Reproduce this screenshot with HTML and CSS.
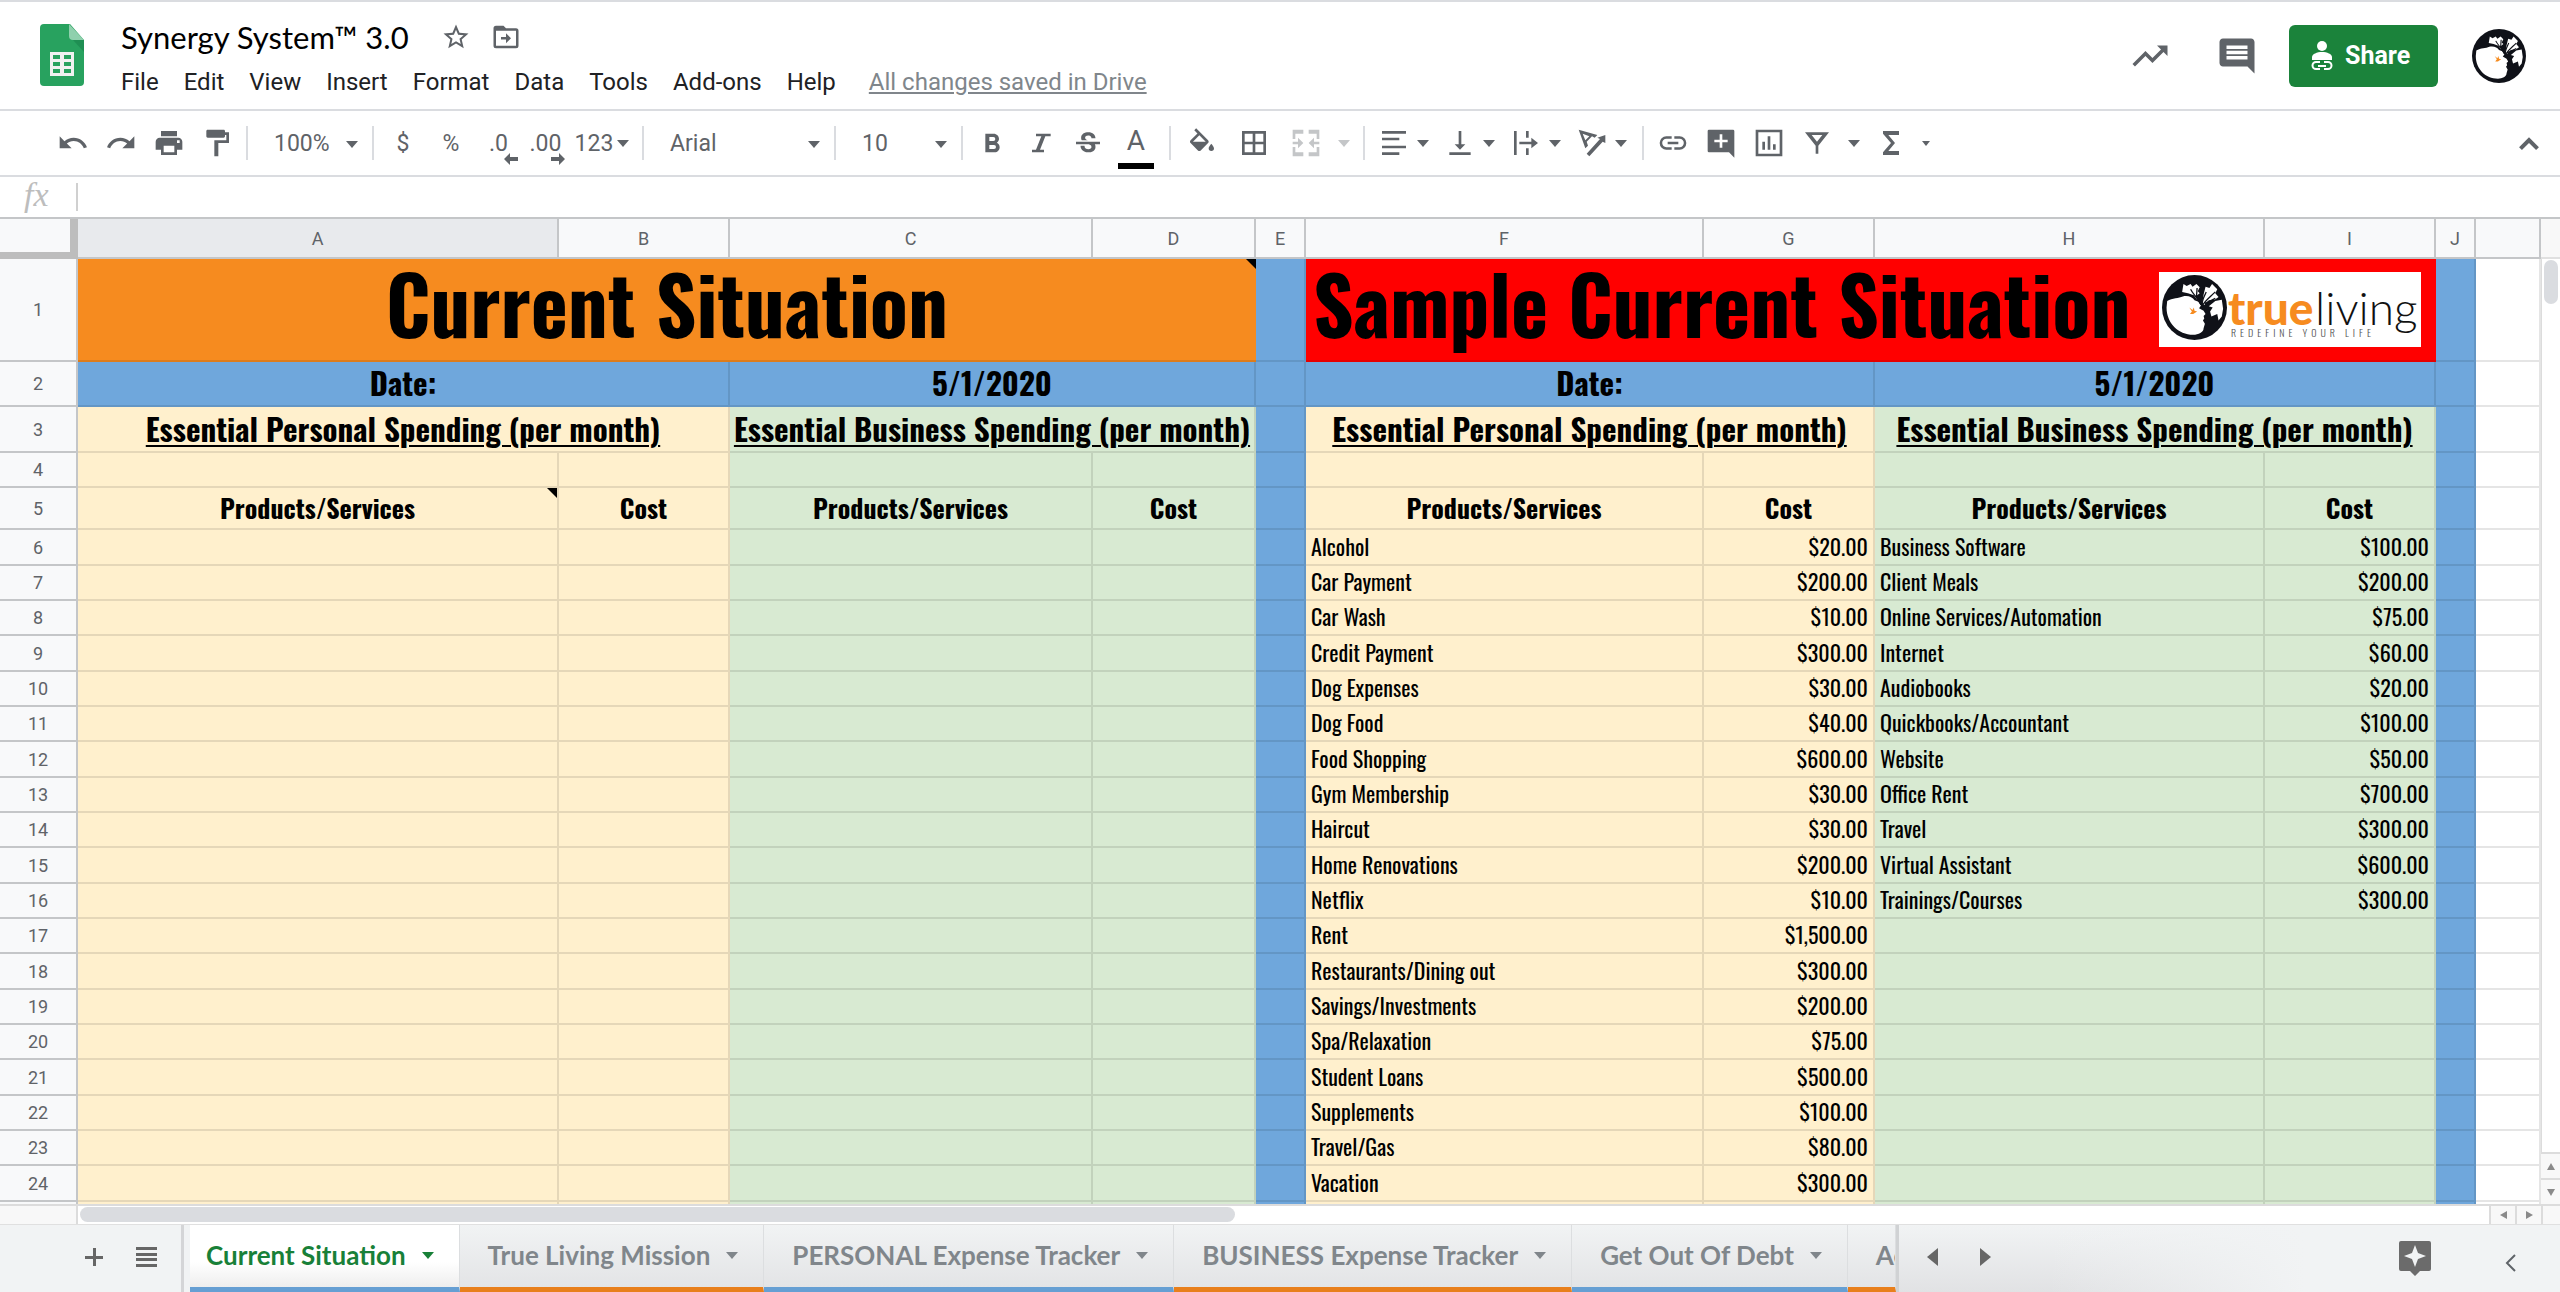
FILE: index.html
```html
<!DOCTYPE html>
<html lang="en">
<head>
    <meta charset="utf-8">
    <title>Synergy System™ 3.0</title>
    <link rel="stylesheet" href="styles.css">
</head>
<body>
    <svg class="defs" aria-hidden="true">
        <symbol id="tree" viewBox="0 0 100 100">
            <circle cx="50" cy="50" r="50" fill="#0f1118"/>
            <path fill="#fff" d="M8 40C16 35 26 36 32 33C40 31 47 34 50 39L56 41L60 47L57 51L64 55L67 60L64 63L65 67L63 70L66 75L64 82C64 88 56 92 48 92C25 92 7 74 7 50Z"/>
            <path fill="#fff" d="M31 26L33 14L38 17L44 14L47 18L53 14L58 19L55 25L58 28L53 32L54 38L49 31L40 28Z"/>
            <path fill="#fff" d="M64 30L67 18L73 20L77 14L85 22L82 28L87 34L81 38L72 39L65 46L62 44Z"/>
            <path fill="#fff" d="M82 40L92 38L94 52L92 64L87 70L85 60L76 64L74 56L78 50L72 48Z"/>
            <path fill="none" stroke="#0f1118" stroke-width="2" d="M62 50C60 40 64 36 68 26M62 47C68 38 74 34 82 26M60 46C54 34 48 30 44 22M53 34L54 20M66 44L82 36"/>
            <path fill="#f68b1f" d="M42 50L47 54L49 50L50 55L54 56L48 60L43 60L46 56Z"/>
        </symbol>
    </svg>

    <header class="top">
        <svg class="sheets-logo" viewBox="0 0 44 62">
            <path fill="#28a25f" d="M4 0h26l14 16v42a4 4 0 0 1-4 4H4a4 4 0 0 1-4-4V4a4 4 0 0 1 4-4z"/>
            <path fill="#8fd0ad" d="M29 0l15 16H33a4 4 0 0 1-4-4z"/>
            <path fill="#1f8f53" d="M33 16h11v12z"/>
            <path fill="#f1f1f1" fill-rule="evenodd" d="M10 28h24v24H10zM13 31v4h7v-4zM24 31v4h7v-4zM13 38v4h7v-4zM24 38v4h7v-4zM13 45v4h7v-4zM24 45v4h7v-4z"/>
        </svg>
        <div class="doc">
            <div class="title-row">
                <h1>Synergy System™ 3.0</h1>
                <button class="plain" aria-label="Star"><svg width="30" height="30" viewBox="0 0 24 24"><path d="M22 9.24l-7.19-.62L12 2 9.19 8.63 2 9.24l5.46 4.73L5.82 21 12 17.27 18.18 21l-1.63-7.03L22 9.24zM12 15.4l-3.76 2.27 1-4.28-3.32-2.88 4.38-.38L12 6.1l1.71 4.04 4.38.38-3.32 2.88 1 4.28L12 15.4z"/></svg></button>
                <button class="plain" aria-label="Move"><svg width="30" height="30" viewBox="0 0 24 24"><path fill-rule="evenodd" d="M4 3h6l2 2h8a2 2 0 0 1 2 2v12a2 2 0 0 1-2 2H4a2 2 0 0 1-2-2V5a2 2 0 0 1 2-2zM4 7v12h16V7zM12 9l4 4-4 4v-3H8v-2h4z"/></svg></button>
            </div>
            <nav class="menus">
                <a href="#">File</a>
                <a href="#">Edit</a>
                <a href="#">View</a>
                <a href="#">Insert</a>
                <a href="#">Format</a>
                <a href="#">Data</a>
                <a href="#">Tools</a>
                <a href="#">Add-ons</a>
                <a href="#">Help</a>
                <a href="#" class="saved">All changes saved in Drive</a>
            </nav>
        </div>
        <div class="actions">
            <button class="plain" aria-label="Activity"><svg width="42" height="42" viewBox="0 0 24 24"><path d="M16 6l2.290 2.290-4.880 4.880-4-4L2 16.590 3.410 18l6-6 4 4 6.300-6.290L22 12V6z"/></svg></button>
            <button class="plain" aria-label="Comments"><svg width="42" height="42" viewBox="0 0 24 24"><path fill-rule="evenodd" d="M22 4c0-1.100-.9-2-2-2H4c-1.100 0-2 .9-2 2v12c0 1.100.9 2 2 2h14l4 4zM18 14H6v-2h12zM18 11H6V9h12zM18 8H6V6h12z"/></svg></button>
            <button class="share">
                <svg width="22" height="30" viewBox="0 0 22 30"><circle cx="11" cy="5" r="5"/><path d="M1 19v-3c0-3 5-5 10-5s10 2 10 5v3z"/><path class="line" d="M9 21H5a3 3 0 0 0 0 7h4M13 21h4a3 3 0 0 1 0 7h-4M7 25h8"/></svg>
                Share
            </button>
            <button class="plain avatar" aria-label="Account"><svg width="54" height="54"><use href="#tree"/></svg></button>
        </div>
    </header>

    <div class="toolbar">
        <div class="group history">
            <button aria-label="Undo"><svg viewBox="0 0 24 24"><path d="M12.500 8c-2.650 0-5.050.99-6.900 2.600L2 7v9h9l-3.620-3.620c1.390-1.160 3.160-1.880 5.120-1.880 3.540 0 6.550 2.310 7.600 5.500l2.370-.78C21.080 11.030 17.150 8 12.500 8z"/></svg></button>
            <button aria-label="Redo"><svg viewBox="0 0 24 24"><path d="M18.400 10.600C16.550 8.990 14.150 8 11.500 8c-4.650 0-8.580 3.030-9.960 7.220L3.900 16c1.050-3.190 4.050-5.500 7.600-5.500 1.950 0 3.730.72 5.120 1.880L13 16h9V7l-3.600 3.600z"/></svg></button>
            <button aria-label="Print"><svg viewBox="0 0 24 24"><path fill-rule="evenodd" d="M19 8H5c-1.660 0-3 1.340-3 3v6h4v4h12v-4h4v-6c0-1.660-1.340-3-3-3zM16 19H8v-5h8zM18 10h2v2h-2zM18 3H6v4h12z"/></svg></button>
            <button aria-label="Paint format"><svg viewBox="0 0 24 24"><path d="M18 4V3c0-.55-.45-1-1-1H5c-.55 0-1 .45-1 1v4c0 .55.45 1 1 1h12c.55 0 1-.45 1-1V6h1v4H10v12h3v-10h8V4z"/></svg></button>
        </div>
        <div class="group zoom">
            <label class="pick"><select aria-label="Zoom"><option>100%</option></select></label>
        </div>
        <div class="group numbers">
            <button>$</button>
            <button>%</button>
            <button class="decimal">.0<svg viewBox="0 0 14 12"><path d="M0 6l6-6v4h8v4H6v4z"/></svg></button>
            <button class="decimal">.00<svg viewBox="0 0 14 12"><path d="M14 6L8 0v4H0v4h8v4z"/></svg></button>
            <button class="more">123<i class="caret"></i></button>
        </div>
        <div class="group font">
            <label class="pick"><select aria-label="Font"><option>Arial</option></select></label>
        </div>
        <div class="group size">
            <label class="pick"><select aria-label="Font size"><option>10</option></select></label>
        </div>
        <div class="group style">
            <button aria-label="Bold"><svg viewBox="0 0 24 24"><path fill-rule="evenodd" d="M15.600 11.790c.97-.67 1.650-1.770 1.650-2.790 0-2.260-1.750-4-4-4H7v14h7.040c2.090 0 3.710-1.700 3.710-3.790 0-1.520-.86-2.820-2.150-3.420zM10 7.500h3a1.500 1.500 0 0 1 0 3h-3zM13.500 16.500H10v-3h3.500a1.500 1.500 0 0 1 0 3z"/></svg></button>
            <button aria-label="Italic"><svg viewBox="0 0 24 24"><path d="M9 5v2h4l-4 10H6v2h9v-2h-3l4-10h4V5z"/></svg></button>
            <button aria-label="Strikethrough"><svg viewBox="0 0 24 24"><path d="M6.850 8.080C6.850 5.370 9.450 4 12.240 4c1.640 0 3 .49 3.900 1.280.77.65 1.460 1.730 1.460 3.240h-3.010c0-.31-.05-.59-.15-.85-.29-.86-1.200-1.280-2.250-1.280-1.860 0-2.340 1.020-2.340 1.700 0 .48.25.88.74 1.210.38.25.77.48 1.410.7H7.390c-.21-.34-.54-.89-.54-1.920zM21 13v-2H3v2h9.620c1.150.45 1.960.75 1.960 1.970 0 1-.81 1.670-2.280 1.670-1.540 0-2.930-.54-2.930-2.510H6.400c0 .55.08 1.130.24 1.580.81 2.290 3.290 3.300 5.670 3.300 2.270 0 5.300-.89 5.300-4.050 0-.3-.01-1.160-.48-1.940z"/></svg></button>
            <button class="text-color">A</button>
        </div>
        <div class="group cells">
            <button aria-label="Fill color"><svg viewBox="0 0 24 24"><path fill-rule="evenodd" d="M16.560 9.940L7.620 1 6.210 2.410l2.380 2.380-5.150 5.150c-.59.59-.59 1.540 0 2.120l5.500 5.500c.6.6 1.500.6 2.120 0l5.500-5.500c.59-.58.59-1.530 0-2.120zM5.210 11L10 6.210 14.790 11zM19 12.500s-2 2.170-2 3.500a2 2 0 0 0 4 0c0-1.330-2-3.500-2-3.500z"/></svg></button>
            <button aria-label="Borders"><svg viewBox="0 0 24 24"><path fill-rule="evenodd" d="M3 3v18h18V3zM11 19H5v-6h6zM11 11H5V5h6zM19 19h-6v-6h6zM19 11h-6V5h6z"/></svg></button>
            <button aria-label="Merge cells" disabled><svg viewBox="0 0 24 24"><path d="M2 2h8v3H4v4H2zM14 2h8v7h-2V5h-6zM2 15h2v4h6v3H2zM20 15h2v7h-8v-3h6zM2 11h4V8l4 4-4 4v-3H2zM22 11h-4V8l-4 4 4 4v-3h4z"/></svg></button>
            <i class="caret off"></i>
        </div>
        <div class="group align">
            <button aria-label="Horizontal align"><svg viewBox="0 0 24 24"><path d="M3 3h18v2H3zM3 8h13v2H3zM3 14h18v2H3zM3 19h13v2H3z"/></svg><i class="caret"></i></button>
            <button aria-label="Vertical align"><svg viewBox="0 0 24 24"><path d="M16 13h-3V3h-2v10H8l4 4zM4 19v2h16v-2z"/></svg><i class="caret"></i></button>
            <button aria-label="Text wrapping"><svg viewBox="0 0 24 24"><path d="M3 3h2v18H3zM12 3h2v5h-2zM12 16h2v5h-2zM7 11h9V8l5 4-5 4v-3H7z"/></svg><i class="caret"></i></button>
            <button aria-label="Text rotation"><svg viewBox="0 0 24 24"><path fill-rule="evenodd" d="M2 2l14 4-2 2-2-1-4 4 1 3-2 2zM5 5l2 5 3-3zM8 20L18 9l-2-1 6-2v6l-2-1L10 22z"/></svg><i class="caret"></i></button>
        </div>
        <div class="group insert">
            <button aria-label="Insert link"><svg viewBox="0 0 24 24"><path d="M3.900 12c0-1.710 1.390-3.100 3.100-3.100h4V7H7a5 5 0 0 0 0 10h4v-1.900H7c-1.710 0-3.100-1.390-3.100-3.100zM8 13h8v-2H8zM17 7h-4v1.900h4a3.100 3.100 0 0 1 0 6.200h-4V17h4a5 5 0 0 0 0-10z"/></svg></button>
            <button aria-label="Insert comment"><svg viewBox="0 0 24 24"><path fill-rule="evenodd" d="M22 3a1 1 0 0 0-1-1H3a1 1 0 0 0-1 1v15a1 1 0 0 0 1 1h15l4 4zM17 11.500h-4v4h-2v-4H7v-2h4v-4h2v4h4z"/></svg></button>
            <button aria-label="Insert chart"><svg viewBox="0 0 24 24"><path fill-rule="evenodd" d="M2 2v20h20V2zM20 20H4V4h16zM7 11h2v6H7zM11 7h2v10h-2zM15 13h2v4h-2z"/></svg></button>
            <button aria-label="Filter"><svg viewBox="0 0 24 24"><path fill-rule="evenodd" d="M3 4h18l-8 10v6h-2v-6zM8 6l4 5 4-5z"/></svg></button>
            <i class="caret"></i>
            <button aria-label="Functions"><svg viewBox="0 0 24 24"><path d="M18 3H6v2l6 7-6 7v2h12v-3h-8l5-6-5-6h8z"/></svg></button>
            <i class="caret small"></i>
        </div>
        <button class="collapse" aria-label="Hide the menus"><svg viewBox="0 0 24 24"><path d="M12 8l-7 7 2 2 5-5 5 5 2-2z"/></svg></button>
    </div>

    <div class="formula">
        <label for="fx">fx</label>
        <input id="fx" type="text">
    </div>

    <main class="sheet">
        <div class="grid">
            <table>
                <colgroup>
                    <col class="w-head">
                    <col class="w-a cream"><col class="w-b cream">
                    <col class="w-c green"><col class="w-d green">
                    <col class="w-e blue">
                    <col class="w-f cream"><col class="w-g cream">
                    <col class="w-h green"><col class="w-i green">
                    <col class="w-j blue">
                    <col>
                </colgroup>
                <thead>
                    <tr><th class="corner"></th><th class="selected">A</th><th>B</th><th>C</th><th>D</th><th>E</th><th>F</th><th>G</th><th>H</th><th>I</th><th>J</th><th></th></tr>
                </thead>
                <tbody>
                    <tr class="banner">
                        <th>1</th>
                        <td colspan="4" class="orange note">Current Situation</td>
                        <td></td>
                        <td colspan="4" class="red">Sample Current Situation
                            <svg class="brand" viewBox="0 0 262 75">
                                <rect width="262" height="75" fill="#fff"/>
                                <use href="#tree" x="3" y="3" width="65" height="65"/>
                                <text x="69" y="53" class="brand-true">true</text>
                                <text x="156" y="53" class="brand-living">living</text>
                                <text x="72" y="65" class="brand-line">REDEFINE YOUR LIFE</text>
                            </svg>
                        </td>
                        <td></td><td></td>
                    </tr>
                    <tr class="dates">
                        <th>2</th>
                        <td colspan="2" class="blue">Date:</td><td colspan="2" class="blue">5/1/2020</td>
                        <td></td>
                        <td colspan="2" class="blue">Date:</td><td colspan="2" class="blue">5/1/2020</td>
                        <td></td><td></td>
                    </tr>
                    <tr class="sections">
                        <th>3</th>
                        <td colspan="2">Essential Personal Spending (per month)</td><td colspan="2">Essential Business Spending (per month)</td>
                        <td></td>
                        <td colspan="2">Essential Personal Spending (per month)</td><td colspan="2">Essential Business Spending (per month)</td>
                        <td></td><td></td>
                    </tr>
                    <tr><th>4</th><td></td><td></td><td></td><td></td><td></td><td></td><td></td><td></td><td></td><td></td><td></td></tr>
                    <tr class="labels"><th>5</th><td class="note">Products/Services</td><td>Cost</td><td>Products/Services</td><td>Cost</td><td></td><td>Products/Services</td><td>Cost</td><td>Products/Services</td><td>Cost</td><td></td><td></td></tr>
                    <tr><th>6</th><td></td><td></td><td></td><td></td><td></td><td>Alcohol</td><td>$20.00</td><td>Business Software</td><td>$100.00</td><td></td><td></td></tr>
                    <tr><th>7</th><td></td><td></td><td></td><td></td><td></td><td>Car Payment</td><td>$200.00</td><td>Client Meals</td><td>$200.00</td><td></td><td></td></tr>
                    <tr><th>8</th><td></td><td></td><td></td><td></td><td></td><td>Car Wash</td><td>$10.00</td><td>Online Services/Automation</td><td>$75.00</td><td></td><td></td></tr>
                    <tr><th>9</th><td></td><td></td><td></td><td></td><td></td><td>Credit Payment</td><td>$300.00</td><td>Internet</td><td>$60.00</td><td></td><td></td></tr>
                    <tr><th>10</th><td></td><td></td><td></td><td></td><td></td><td>Dog Expenses</td><td>$30.00</td><td>Audiobooks</td><td>$20.00</td><td></td><td></td></tr>
                    <tr><th>11</th><td></td><td></td><td></td><td></td><td></td><td>Dog Food</td><td>$40.00</td><td>Quickbooks/Accountant</td><td>$100.00</td><td></td><td></td></tr>
                    <tr><th>12</th><td></td><td></td><td></td><td></td><td></td><td>Food Shopping</td><td>$600.00</td><td>Website</td><td>$50.00</td><td></td><td></td></tr>
                    <tr><th>13</th><td></td><td></td><td></td><td></td><td></td><td>Gym Membership</td><td>$30.00</td><td>Office Rent</td><td>$700.00</td><td></td><td></td></tr>
                    <tr><th>14</th><td></td><td></td><td></td><td></td><td></td><td>Haircut</td><td>$30.00</td><td>Travel</td><td>$300.00</td><td></td><td></td></tr>
                    <tr><th>15</th><td></td><td></td><td></td><td></td><td></td><td>Home Renovations</td><td>$200.00</td><td>Virtual Assistant</td><td>$600.00</td><td></td><td></td></tr>
                    <tr><th>16</th><td></td><td></td><td></td><td></td><td></td><td>Netflix</td><td>$10.00</td><td>Trainings/Courses</td><td>$300.00</td><td></td><td></td></tr>
                    <tr><th>17</th><td></td><td></td><td></td><td></td><td></td><td>Rent</td><td>$1,500.00</td><td></td><td></td><td></td><td></td></tr>
                    <tr><th>18</th><td></td><td></td><td></td><td></td><td></td><td>Restaurants/Dining out</td><td>$300.00</td><td></td><td></td><td></td><td></td></tr>
                    <tr><th>19</th><td></td><td></td><td></td><td></td><td></td><td>Savings/Investments</td><td>$200.00</td><td></td><td></td><td></td><td></td></tr>
                    <tr><th>20</th><td></td><td></td><td></td><td></td><td></td><td>Spa/Relaxation</td><td>$75.00</td><td></td><td></td><td></td><td></td></tr>
                    <tr><th>21</th><td></td><td></td><td></td><td></td><td></td><td>Student Loans</td><td>$500.00</td><td></td><td></td><td></td><td></td></tr>
                    <tr><th>22</th><td></td><td></td><td></td><td></td><td></td><td>Supplements</td><td>$100.00</td><td></td><td></td><td></td><td></td></tr>
                    <tr><th>23</th><td></td><td></td><td></td><td></td><td></td><td>Travel/Gas</td><td>$80.00</td><td></td><td></td><td></td><td></td></tr>
                    <tr><th>24</th><td></td><td></td><td></td><td></td><td></td><td>Vacation</td><td>$300.00</td><td></td><td></td><td></td><td></td></tr>
                    <tr><th></th><td></td><td></td><td></td><td></td><td></td><td></td><td></td><td></td><td></td><td></td><td></td></tr>
                </tbody>
            </table>
        </div>
        <div class="vscroll">
            <div class="vhead"></div>
            <div class="vtrack"><div class="vthumb"></div></div>
            <button aria-label="Scroll up"><i class="arrow up"></i></button>
            <button aria-label="Scroll down"><i class="arrow down"></i></button>
        </div>
        <div class="hscroll">
            <div class="hhead"></div>
            <div class="htrack"><div class="hthumb"></div></div>
            <button aria-label="Scroll left"><i class="arrow left"></i></button>
            <button aria-label="Scroll right"><i class="arrow right"></i></button>
            <div class="hend"></div>
        </div>
    </main>

    <footer class="tabbar">
        <div class="tab-tools">
            <button class="plain" aria-label="Add sheet"><svg width="18" height="18" viewBox="0 0 18 18"><path d="M8 0h3v8h7v3h-7v7H8v-7H0V8h8z"/></svg></button>
            <button class="plain" aria-label="All sheets"><svg width="21" height="20" viewBox="0 0 21 20"><path d="M0 0h21v3H0zM0 6h21v3H0zM0 11h21v3H0zM0 17h21v3H0z"/></svg></button>
        </div>
        <div class="tabs">
            <button class="tab active">Current Situation<i class="caret"></i></button>
            <button class="tab alt">True Living Mission<i class="caret"></i></button>
            <button class="tab">PERSONAL Expense Tracker<i class="caret"></i></button>
            <button class="tab alt">BUSINESS Expense Tracker<i class="caret"></i></button>
            <button class="tab">Get Out Of Debt<i class="caret"></i></button>
            <button class="tab alt cut">Ac</button>
        </div>
        <div class="tab-nav">
            <button class="plain" aria-label="Previous tabs"><svg width="11" height="18" viewBox="0 0 11 18"><path d="M11 0v18L0 9z"/></svg></button>
            <button class="plain" aria-label="Next tabs"><svg width="11" height="18" viewBox="0 0 11 18"><path d="M0 0v18l11-9z"/></svg></button>
        </div>
        <button class="plain explore" aria-label="Explore"><svg width="32" height="35" viewBox="0 0 32 35"><path fill-rule="evenodd" d="M2 0h28a2 2 0 0 1 2 2v26a2 2 0 0 1-2 2h-9l-5 5-5-5H2a2 2 0 0 1-2-2V2a2 2 0 0 1 2-2zM16 4l-3 8-8 3 8 3 3 8 3-8 8-3-8-3z"/></svg></button>
        <button class="plain side" aria-label="Show side panel"><svg width="11" height="18" viewBox="0 0 11 18"><path class="line" d="M10 1L2 9l8 8"/></svg></button>
    </footer>
</body>
</html>
```

FILE: styles.css
```css
* {
    box-sizing: border-box;
}
body {
    margin: 0;
    height: 100vh;
    display: flex;
    flex-direction: column;
    overflow: hidden;
    background: #fff;
    color: #202124;
    font-family: Roboto, "Liberation Sans", sans-serif;
    font-size: 23px;
}
button {
    padding: 0;
    border: 0;
    background: none;
    color: #5f6368;
    font: inherit;
    cursor: pointer;
}
svg {
    display: block;
    flex: none;
    fill: currentColor;
}
.line {
    fill: none;
    stroke: currentColor;
    stroke-width: 2;
}
.defs {
    position: absolute;
    width: 0;
    height: 0;
}

/* header */
.top {
    display: flex;
    height: 111px;
    flex: none;
    padding: 0 34px 0 40px;
    border-top: 2px solid #dadce0;
    border-bottom: 2px solid #dadce0;
}
.sheets-logo {
    width: 44px;
    height: 62px;
    margin-top: 22px;
}
.doc {
    flex: 1;
    padding: 17px 0 0 37px;
}
.title-row {
    display: flex;
    align-items: center;
    gap: 20px;
    height: 36px;
}
h1 {
    margin: 0 12px 0 0;
    color: #000;
    font-family: Lato, sans-serif;
    font-size: 31px;
    font-weight: 400;
    line-height: 36px;
}
.menus {
    display: flex;
    gap: 25px;
    margin-top: 10px;
    font-size: 24px;
    line-height: 34px;
}
.menus a {
    color: #202124;
    text-decoration: none;
}
.menus .saved {
    margin-left: 8px;
    color: #80868b;
    text-decoration: underline;
}
.actions {
    display: flex;
    align-items: center;
    height: 107px;
}
.actions .plain {
    margin-right: 45px;
}
.share {
    display: flex;
    align-items: center;
    gap: 12px;
    width: 149px;
    height: 62px;
    margin-right: 34px;
    padding-left: 22px;
    border-radius: 6px;
    background: #1b833b;
    color: #fff;
    font-size: 25px;
    font-weight: 700;
}
.actions .plain + .share {
    margin-left: -14px;
}
.actions .avatar {
    margin-right: 0;
}

/* toolbar */
.toolbar {
    display: flex;
    align-items: center;
    flex: none;
    height: 66px;
    padding-left: 49px;
    border-bottom: 2px solid #dadce0;
    color: #5f6368;
}
.group {
    display: flex;
    align-items: center;
    height: 34px;
    margin-right: 5px;
    padding-right: 5px;
    border-right: 2px solid #dadce0;
}
.group button {
    display: flex;
    align-items: center;
    justify-content: center;
    width: 48px;
    height: 34px;
    color: #5f6368;
}
.group svg {
    width: 32px;
    height: 32px;
}
.group button:disabled {
    color: #c4c6c8;
}
.caret {
    flex: none;
    width: 0;
    border: 6px solid transparent;
    border-top: 7px solid currentColor;
    border-bottom: 0;
}
.caret.off {
    margin-left: 6px;
    color: #c4c6c8;
}
.caret.small {
    border-width: 5px 4px 0;
}
.history {
    width: 199px;
}
.zoom {
    width: 121px;
}
.numbers {
    width: 265px;
}
.font {
    width: 187px;
}
.size {
    width: 122px;
}
.style {
    width: 203px;
}
.cells {
    width: 189px;
}
.align {
    width: 274px;
}
.pick {
    position: relative;
    flex: 1;
}
.pick select {
    appearance: none;
    width: 100%;
    border: 0;
    padding-left: 21px;
    background: none;
    color: #5f6368;
    font: inherit;
}
.pick::after {
    content: "";
    position: absolute;
    right: 9px;
    top: 11px;
    border: 6px solid transparent;
    border-top: 7px solid #5f6368;
    border-bottom: 0;
    pointer-events: none;
}
.group .decimal {
    position: relative;
    width: 47px;
}
.group .decimal svg {
    position: absolute;
    right: 4px;
    bottom: -5px;
    width: 14px;
    height: 12px;
}
.group .more {
    width: 66px;
    gap: 4px;
}
.group .text-color {
    width: 36px;
    margin-left: 6px;
    height: 44px;
    margin-top: 8px;
    padding-bottom: 8px;
    border-bottom: 6px solid #000;
    font-size: 28px;
}
.cells button {
    width: 52px;
}
.align button {
    gap: 7px;
    width: 66px;
}
.insert {
    border: 0;
}
.insert .caret {
    margin: 0 7px;
}
.collapse {
    margin-left: auto;
    margin-right: 14px;
}
.collapse svg {
    width: 34px;
    height: 34px;
}

/* formula bar */
.formula {
    display: flex;
    align-items: center;
    flex: none;
    height: 40px;
}
.formula label {
    width: 78px;
    padding: 0 0 4px 24px;
    border-right: 2px solid #d0d0d0;
    color: #bdbdbd;
    font: italic 34px/24px "Liberation Serif", serif;
}
.formula input {
    flex: 1;
    border: 0;
    outline: 0;
    font: inherit;
}

/* sheet */
.sheet {
    display: grid;
    grid-template-columns: 1fr 19px;
    grid-template-rows: 1fr 20px;
    flex: 1;
    min-height: 0;
    border-top: 2px solid #c4c6c8;
}
.grid {
    overflow: hidden;
}
table {
    width: 100%;
    table-layout: fixed;
    border-collapse: separate;
    border-spacing: 0;
    color: #000;
    font-family: Oswald, "Roboto Condensed", sans-serif;
    font-size: 22px;
}
.w-head { width: 78px; }
.w-a { width: 481px; }
.w-b { width: 171px; }
.w-c { width: 363px; }
.w-d { width: 163px; }
.w-e { width: 50px; }
.w-f { width: 398px; }
.w-g { width: 171px; }
.w-h { width: 390px; }
.w-i { width: 171px; }
.w-j { width: 40px; }
.cream { background: #fff0cd; }
.green { background: #d8ead2; }
.blue { background: #6fa7dc; }
.orange { background: #f68b1f; }
.red { background: #f00; }

th {
    padding: 0;
    border-right: 2px solid #c4c6c8;
    border-bottom: 2px solid #c4c6c8;
    background: #f8f9fa;
    color: #5f6368;
    font: 18px Roboto, sans-serif;
}
thead th {
    height: 40px;
}
th.selected {
    background: #e8eaed;
}
th.corner {
    border-right: 8px solid #bdbdbd;
    border-bottom: 7px solid #bdbdbd;
}
td {
    padding: 0 5px 3px;
    border-right: 2px solid rgba(0, 0, 0, 0.1);
    border-bottom: 2px solid rgba(0, 0, 0, 0.1);
    line-height: 30px;
    vertical-align: bottom;
    white-space: nowrap;
}
tbody tr {
    height: 35px;
}
tbody tr:nth-child(3n) {
    height: 36px;
}
td:nth-child(8),
td:nth-child(10) {
    text-align: right;
}
tbody .banner {
    height: 103px;
}
.banner td {
    font-size: 79px;
    font-weight: 700;
    line-height: 84px;
    padding-bottom: 15px;
}
.banner .orange {
    text-align: center;
}
.banner .orange,
.banner .red {
    position: relative;
    border-right: 0;
}
.banner .red {
    padding-left: 7px;
}
tbody .dates {
    height: 45px;
}
tbody tr.sections {
    height: 46px;
}
.dates td,
.sections td {
    padding: 0 0 3px;
    font-size: 31px;
    font-weight: 700;
    line-height: 40px;
    text-align: center;
}
.sections td {
    text-decoration: underline;
    text-decoration-thickness: 2px;
    text-underline-offset: 3px;
}
tbody .labels {
    height: 42px;
}
.labels td {
    font-size: 26px;
    font-weight: 700;
    line-height: 34px;
    text-align: center !important;
}
.note {
    position: relative;
}
.note::after {
    content: "";
    position: absolute;
    top: 0;
    right: 0;
    border-top: 10px solid #000;
    border-left: 10px solid transparent;
}
.brand {
    position: absolute;
    top: 13px;
    right: 15px;
    width: 262px;
    height: 75px;
}
.brand-true {
    fill: #f68b1f;
    font: 900 46px Lato, sans-serif;
}
.brand-living {
    fill: #111;
    font: 300 46px Lato, sans-serif;
}
.brand-line {
    fill: #555;
    font: 300 10px Oswald, sans-serif;
    letter-spacing: 4px;
}

/* scrollbars */
.vscroll {
    display: flex;
    flex-direction: column;
}
.vhead {
    height: 40px;
    background: #f8f8f8;
    border-bottom: 2px solid #e0e0e0;
}
.vtrack {
    flex: 1;
    padding: 1px 2px;
    border-left: 1px solid #dcdcdc;
}
.vthumb {
    height: 44px;
    border-radius: 8px;
    background: #dadce0;
}
.vscroll button,
.hscroll button {
    display: flex;
    align-items: center;
    justify-content: center;
    background: #f8f8f8;
    color: #8a8a8a;
}
.vscroll button {
    height: 26px;
    border-top: 2px solid #dcdcdc;
}
.hscroll {
    grid-column: 1 / 3;
    display: flex;
    border-top: 2px solid #dcdcdc;
}
.hhead {
    width: 78px;
    border-right: 2px solid #dcdcdc;
    background: #f8f8f8;
}
.htrack {
    flex: 1;
    padding: 1px 2px;
}
.hthumb {
    width: 48%;
    height: 15px;
    border-radius: 8px;
    background: #dadce0;
}
.hscroll button {
    width: 26px;
    border-left: 2px solid #dcdcdc;
}
.hend {
    width: 19px;
    border-left: 2px solid #dcdcdc;
    background: #f8f8f8;
}
.arrow {
    border: 4px solid transparent;
}
.arrow.up {
    border-top: 0;
    border-bottom: 7px solid currentColor;
}
.arrow.down {
    border-bottom: 0;
    border-top: 7px solid currentColor;
}
.arrow.left {
    border-left: 0;
    border-right: 7px solid currentColor;
}
.arrow.right {
    border-right: 0;
    border-left: 7px solid currentColor;
}

/* sheet tabs */
.tabbar {
    display: flex;
    flex: none;
    height: 68px;
    border-top: 1px solid #e0e0e0;
    background: linear-gradient(to right, #f1f3f4 10%, transparent 20%, transparent 80%, #f1f3f4 90%), linear-gradient(#f1f3f4, #e1e2e4);
}
.tab-tools {
    display: flex;
    align-items: center;
    gap: 33px;
    width: 184px;
    padding: 0 0 4px 85px;
    border-right: 3px solid #d4d5d7;
}
.tab-tools button {
    color: #666;
}
.tabs {
    display: flex;
    padding-left: 6px;
    border-right: 3px solid #d0d2d4;
}
.tab {
    display: flex;
    align-items: center;
    gap: 16px;
    padding: 0 25px 2px 28px;
    border-right: 1px solid #dcdee0;
    border-bottom: 5px solid #669fd3;
    background: linear-gradient(#f1f3f4, #e3e4e6);
    color: #80868b;
    font-family: Lato, sans-serif;
    font-size: 26px;
    font-weight: 700;
}
.tab.alt {
    border-bottom-color: #e87f1c;
}
.tab.active {
    padding-left: 16px;
    background: linear-gradient(#fff 60%, #eee);
    color: #188038;
}
.tab.cut {
    width: 48px;
    padding-right: 0;
    overflow: hidden;
}
.tab-nav {
    display: flex;
    gap: 42px;
    padding: 0 0 4px 28px;
}
.tab-nav button {
    color: #666;
}
.explore {
    margin-left: auto;
    margin-right: 74px;
    color: #6b6b6b;
}
.side {
    margin-right: 44px;
    padding-top: 8px;
}
```
